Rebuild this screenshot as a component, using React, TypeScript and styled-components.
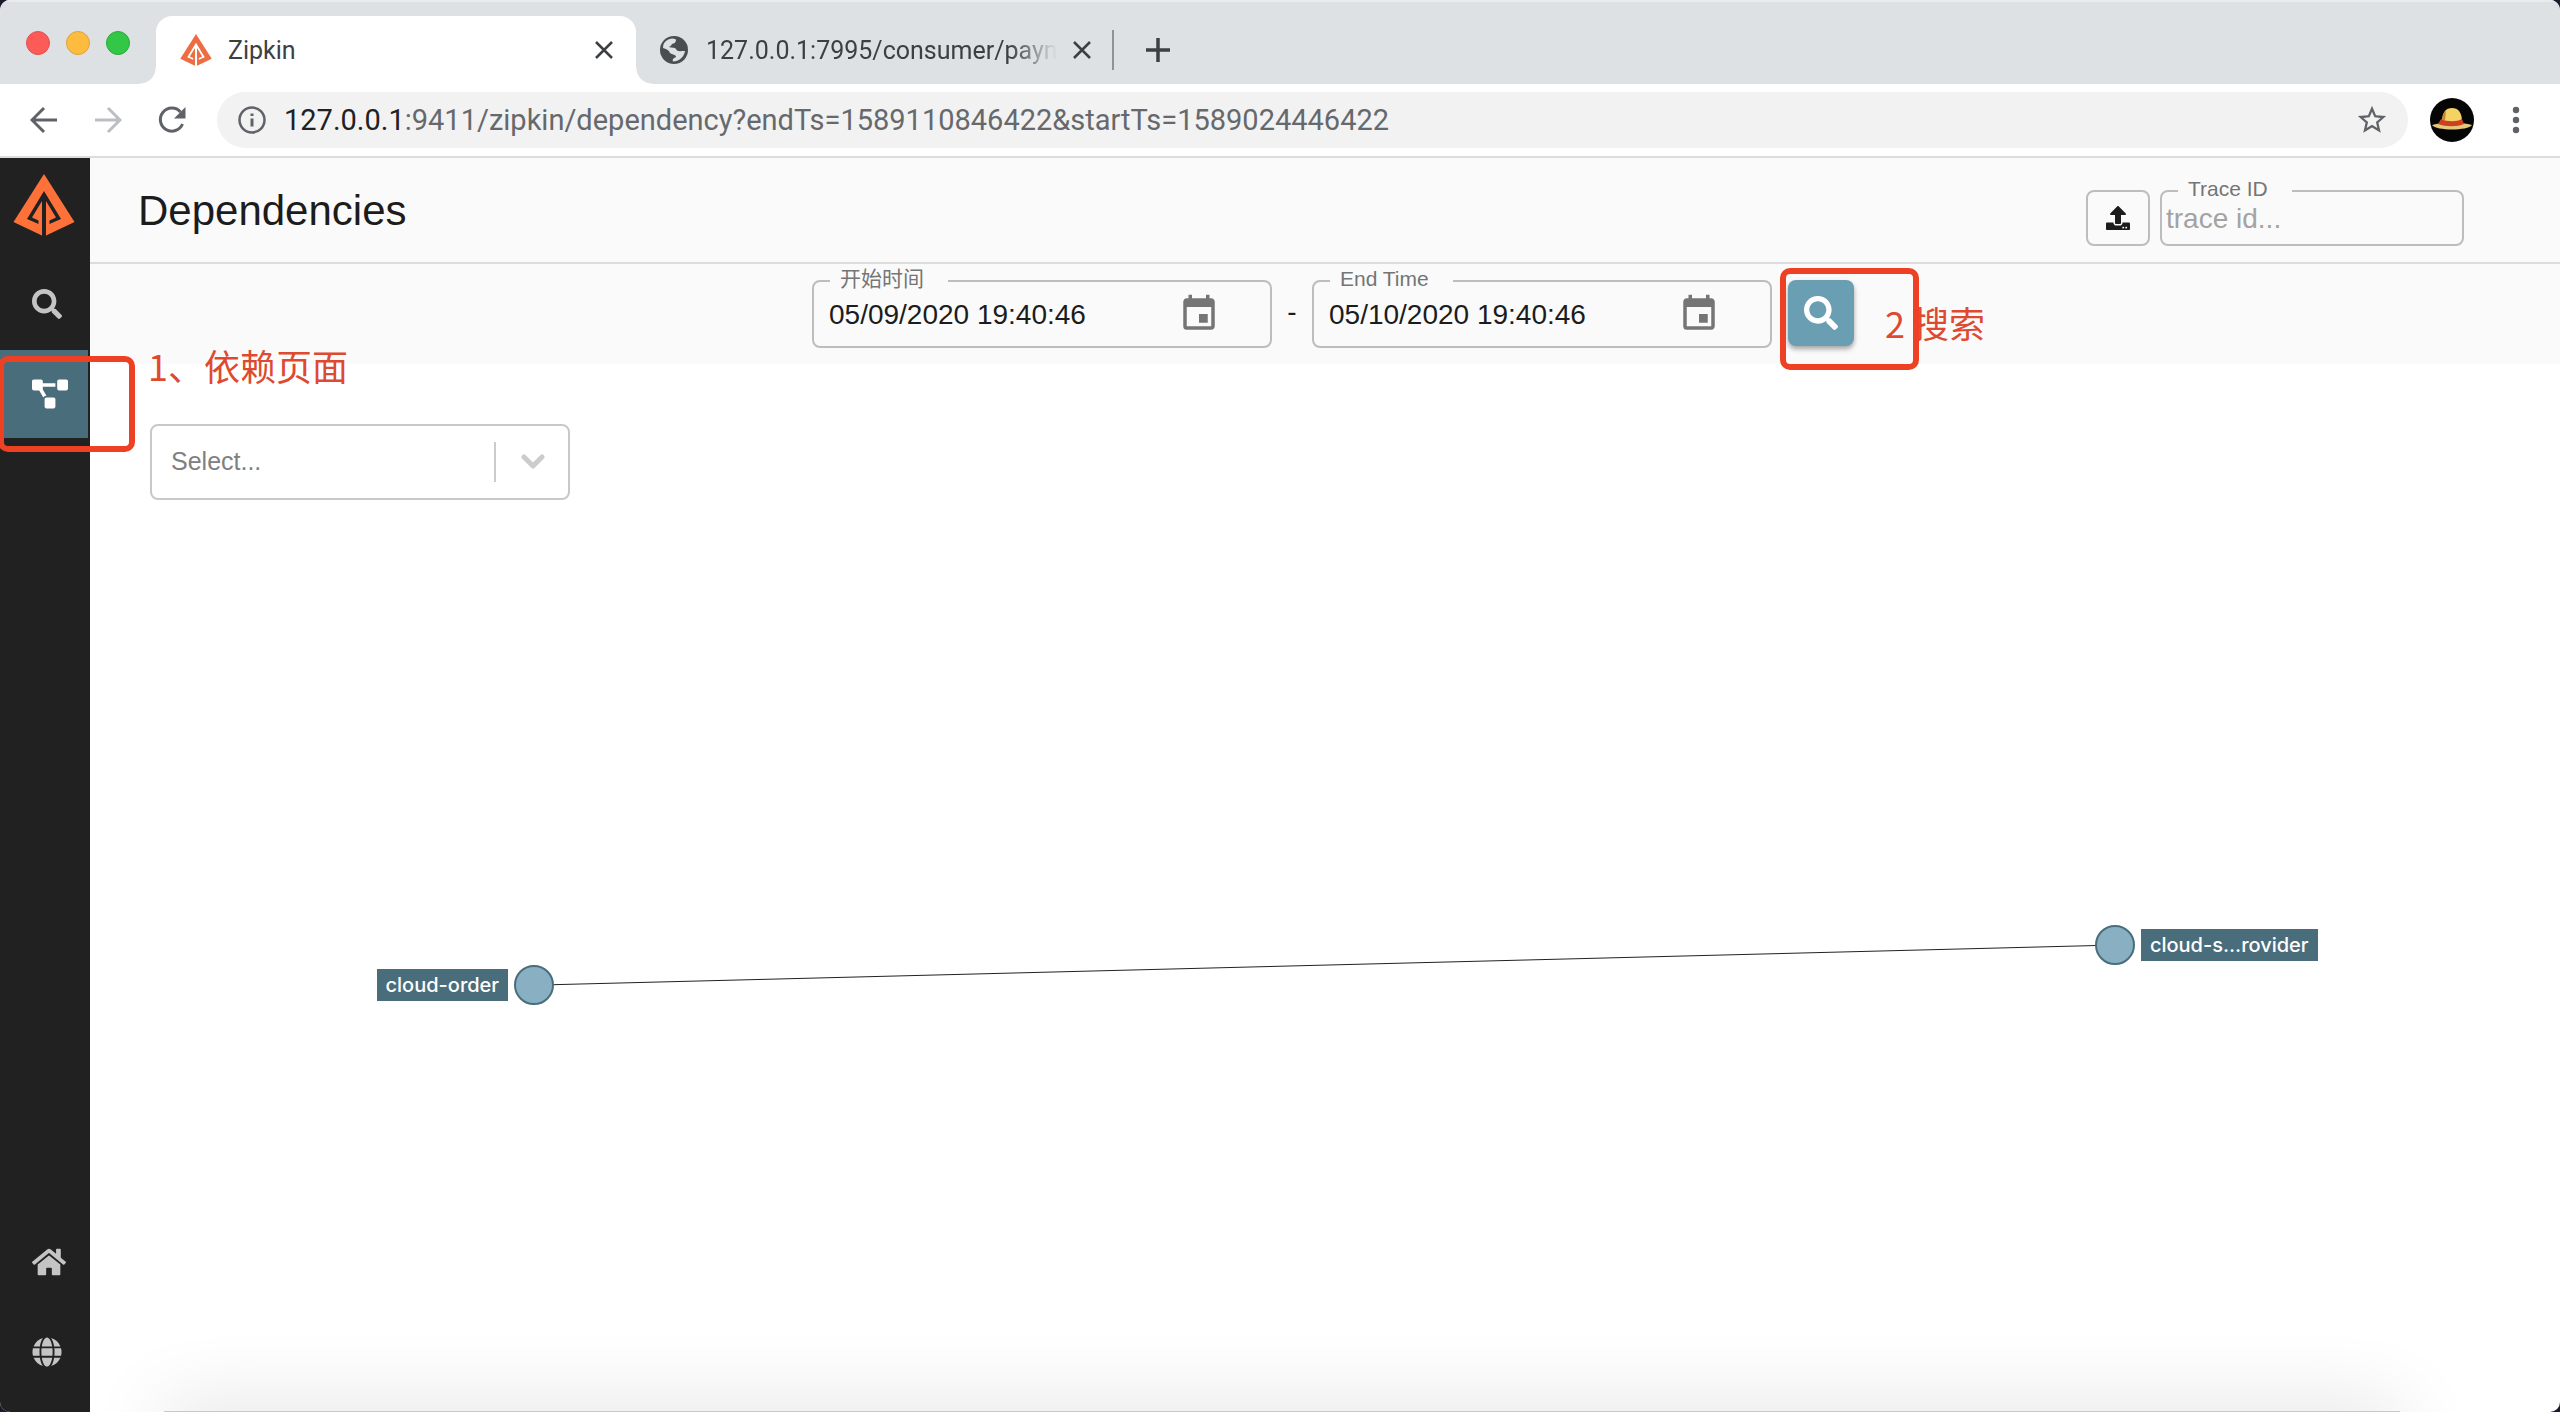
import React from "react";
import styled, { createGlobalStyle, css } from "styled-components";
import { FaSearch, FaProjectDiagram, FaHome, FaGlobe, FaUpload } from "react-icons/fa";
import { MdEvent, MdStarBorder } from "react-icons/md";

const uiFont = `"Liberation Sans", "Noto Sans CJK SC", sans-serif`;
const chromeFont = `Roboto, "Noto Sans CJK SC", sans-serif`;

const GlobalStyle = createGlobalStyle`
  *, *::before, *::after { box-sizing: border-box; }
  body { margin: 0; background: #1b1b2c; font-family: ${uiFont}; }
  button, input, select { font-family: inherit; margin: 0; }
`;

const BrowserWindow = styled.div`
  display: flex;
  flex-direction: column;
  min-height: 100vh;
  border-radius: 10px;
  overflow: hidden;
  background: #fff;
`;

/* ---------- browser chrome ---------- */

const TabStrip = styled.header`
  display: flex;
  align-items: stretch;
  height: 84px;
  padding-top: 16px;
  background: #dde1e4;
  box-shadow: inset 0 2px 0 #e9ecef;
  font-family: ${chromeFont};
`;

const TrafficLights = styled.div`
  display: flex;
  gap: 16px;
  width: 156px;
  padding: 15px 0 0 26px;
`;

const Light = styled.button<{ $color: string; $edge: string }>`
  width: 24px;
  height: 24px;
  padding: 0;
  border: 1px solid ${(p) => p.$edge};
  border-radius: 50%;
  background: ${(p) => p.$color};
`;

const Tab = styled.div<{ $active?: boolean }>`
  position: relative;
  display: flex;
  align-items: center;
  font-size: 25px;
  color: #3c4043;
  ${(p) =>
    p.$active
      ? css`
          width: 480px;
          padding: 0 20px 0 24px;
          border-radius: 16px 16px 0 0;
          background: #fff;
          &::before,
          &::after {
            content: "";
            position: absolute;
            bottom: 0;
            width: 16px;
            height: 16px;
          }
          &::before {
            right: 100%;
            background: radial-gradient(circle at 0 0, transparent 15px, #fff 16px);
          }
          &::after {
            left: 100%;
            background: radial-gradient(circle at 100% 0, transparent 15px, #fff 16px);
          }
        `
      : css`
          width: 478px;
          padding: 0 20px 0 22px;
          &::after {
            content: "";
            position: absolute;
            right: 0;
            width: 2px;
            height: 40px;
            background: #8f9296;
          }
        `}
`;

const TabTitle = styled.span<{ $fade?: boolean }>`
  flex: 1;
  min-width: 0;
  overflow: hidden;
  white-space: nowrap;
  margin: 0 2px 0 16px;
  ${(p) => p.$fade && css`mask-image: linear-gradient(to right, #000 84%, transparent 97%);`}
`;

const IconButton = styled.button<{ $size: number; $color?: string }>`
  display: flex;
  align-items: center;
  justify-content: center;
  flex: none;
  width: ${(p) => p.$size}px;
  height: ${(p) => p.$size}px;
  padding: 0;
  border: 0;
  background: none;
  color: ${(p) => p.$color ?? "#5f6368"};
`;

const NewTab = styled(IconButton)`
  align-self: center;
  margin-left: 28px;
`;

const Toolbar = styled.div`
  display: flex;
  align-items: center;
  height: 74px;
  padding: 0 24px;
  border-bottom: 2px solid #dcdcde;
  background: #fff;
  font-family: ${chromeFont};
`;

const NavButtons = styled.div`
  display: flex;
  gap: 24px;
  width: 193px;
`;

const Omnibox = styled.div`
  position: relative;
  display: flex;
  flex: 1;
  align-items: center;
  gap: 18px;
  height: 56px;
  padding: 0 18px 0 21px;
  border-radius: 28px;
  background: #f2f2f3;
`;

const Address = styled.a`
  flex: 1;
  font-size: 29px;
  line-height: 36px;
  color: #66696c;
  text-decoration: none;
  white-space: nowrap;
  strong { font-weight: 400; color: #202124; }
`;

const Avatar = styled.button`
  width: 44px;
  height: 44px;
  margin: 0 22px;
  padding: 0;
  border: 0;
  border-radius: 50%;
  background: none;
  svg { display: block; }
`;

/* ---------- page ---------- */

const Page = styled.div`
  display: flex;
  flex: 1;
`;

const Sidebar = styled.nav`
  display: flex;
  flex-direction: column;
  gap: 2px;
  width: 90px;
  padding-bottom: 16px;
  background: #212121;
`;

const LogoLink = styled.a`
  display: block;
  height: 100px;
  padding: 16px 0 0 13px;
  svg { display: block; }
`;

const NavItem = styled.a<{ $active?: boolean; $bottom?: boolean }>`
  position: relative;
  display: flex;
  align-items: center;
  width: 88px;
  height: 88px;
  padding-left: 32px;
  margin-top: ${(p) => (p.$bottom ? "auto" : 0)};
  background: ${(p) => (p.$active ? "#4a6d7c" : "transparent")};
  color: ${(p) => (p.$active ? "#fff" : "#c4c4c4")};
`;

const Main = styled.main`
  display: flex;
  flex: 1;
  flex-direction: column;
  min-width: 0;
`;

const TitleBar = styled.div`
  display: flex;
  align-items: flex-start;
  justify-content: space-between;
  height: 106px;
  padding: 32px 96px 0 48px;
  border-bottom: 2px solid #dcdcdc;
  background: #fafafa;
`;

const Title = styled.h1`
  margin: 0;
  font-size: 42px;
  font-weight: 400;
  line-height: 42px;
  color: #1c1c1c;
`;

const TitleTools = styled.div`
  display: flex;
  gap: 10px;
`;

const UploadButton = styled.button`
  display: flex;
  align-items: center;
  justify-content: center;
  width: 64px;
  height: 56px;
  border: 2px solid #bdbdbd;
  border-radius: 8px;
  background: #fafafa;
  color: #1c1c1c;
`;

const Field = styled.div<{ $width: number; $height: number }>`
  position: relative;
  display: flex;
  align-items: center;
  width: ${(p) => p.$width}px;
  height: ${(p) => p.$height}px;
  border: 2px solid #bdbdbd;
  border-radius: 8px;
`;

const FieldLabel = styled.label`
  position: absolute;
  top: -15px;
  left: 16px;
  padding: 0 24px 0 10px;
  background: #fafafa;
  font-size: 21px;
  line-height: 24px;
  color: #757575;
  white-space: nowrap;
`;

const FieldInput = styled.input<{ $pad: number }>`
  flex: 1;
  min-width: 0;
  height: 44px;
  padding: 2px 0 0 ${(p) => p.$pad}px;
  border: 0;
  outline: 0;
  background: none;
  font-size: 28px;
  color: #1c1c1c;
  &::placeholder { color: #a3a3a3; opacity: 1; }
`;

const CalendarButton = styled(IconButton)`
  margin-right: 50px;
`;

const SearchBar = styled.form`
  display: flex;
  justify-content: center;
  height: 100px;
  padding: 16px 0 0 16px;
  background: #fafafa;
`;

const Dash = styled.span`
  width: 40px;
  font-size: 28px;
  line-height: 64px;
  text-align: center;
  color: #1c1c1c;
`;

const SearchSlot = styled.div`
  position: relative;
  margin-left: 16px;
`;

const SearchButton = styled.button`
  display: flex;
  align-items: center;
  justify-content: center;
  width: 66px;
  height: 66px;
  padding: 0;
  border: 0;
  border-radius: 8px;
  background: #6a9eb3;
  box-shadow: 0 3px 5px rgba(0, 0, 0, 0.35);
  color: #fff;
`;

const FilterRow = styled.div`
  padding: 60px 60px 0;
`;

const SelectBox = styled.div`
  position: relative;
  width: 420px;
  height: 76px;
`;

const FilterSelect = styled.select`
  appearance: none;
  width: 100%;
  height: 100%;
  padding: 0 84px 2px 19px;
  border: 2px solid #c8c8c8;
  border-radius: 8px;
  background: #fff;
  font-size: 25px;
  color: #808080;
`;

const SelectArrow = styled.span`
  position: absolute;
  top: 18px;
  right: 0;
  display: flex;
  align-items: center;
  justify-content: center;
  width: 76px;
  height: 40px;
  border-left: 2px solid #ccc;
  pointer-events: none;
`;

const Graph = styled.section`
  position: relative;
  flex: 1;
  min-height: 480px;
  overflow: hidden;
`;

const Edges = styled.svg`
  position: absolute;
  width: 100%;
  height: 100%;
`;

const Node = styled.div`
  position: absolute;
  width: 40px;
  height: 40px;
  margin: -20px 0 0 -20px;
  border: 2px solid #4a6d7c;
  border-radius: 50%;
  background: #88b0c2;
`;

const NodeLabel = styled.span<{ $side: "left" | "right" }>`
  position: absolute;
  top: 2px;
  ${(p) => (p.$side === "left" ? "right" : "left")}: 44px;
  padding: 0 9px;
  background: #4a6d7c;
  font-family: Inter, sans-serif;
  font-size: 20px;
  font-weight: 500;
  line-height: 32px;
  color: #fff;
  white-space: nowrap;
`;

const DockShade = styled.div`
  position: absolute;
  top: calc(100% - 1px);
  left: 74px;
  right: 160px;
  height: 40px;
  background: #c8c8c8;
  box-shadow: 0 0 80px rgba(0, 0, 0, 0.16);
`;

/* ---------- annotations ---------- */

const Marker = styled.span`
  position: absolute;
  z-index: 2;
  border: 6px solid #ee4023;
  border-radius: 10px;
  pointer-events: none;
`;

const NavMarker = styled(Marker)`
  top: 6px;
  left: -2px;
  width: 137px;
  height: 96px;
`;

const SearchMarker = styled(Marker)`
  top: -12px;
  left: -8px;
  width: 139px;
  height: 102px;
`;

const Note = styled.span`
  position: absolute;
  z-index: 1;
  font-size: 36px;
  line-height: 44px;
  font-family: "Noto Sans CJK SC", sans-serif;
  font-weight: 400;
  color: #dd4a30;
  white-space: nowrap;
`;

const NavNote = styled(Note)`
  top: -7px;
  left: 148px;
`;

const SearchNote = styled(Note)`
  top: 20px;
  left: 97px;
`;

/* ---------- drawings ---------- */

const ZipkinMark = ({ size, color, hole }: { size: number; color: string; hole: string }) => (
  <svg width={size} height={size} viewBox="0 0 62 62" aria-hidden="true">
    <path d="M31 0 L61.500 48 L31 62.500 L0.500 48 Z" fill={color} />
    <path d="M29 62 V27 L19 43.500 L25.500 46.500 V50 L14 45 L31 17 L48 45 L36.500 50 V46.500 L43 43.500 L33 27 V62 Z" fill={hole} />
  </svg>
);

const TabGlobe = () => (
  <svg width="32" height="32" viewBox="0 0 32 32" aria-hidden="true">
    <circle cx="16" cy="16" r="14" fill="#4a4e52" />
    <path
      d="M5 14 C5 8 9 5 15 4.500 L18 5.500 C18 9 16 9.500 14 10 C13 12 12 12 11 13 C13 14 17 13 18 15 C19 18 22 17 27 17 C26 23 21 27.500 15 27.500 C14 25 16 24 18 23 C18 20 14 21 12 19 C11 16 8 15 5 14 Z"
      fill="#dde1e4"
    />
  </svg>
);

const Cross = () => (
  <svg width="18" height="18" viewBox="0 0 18 18" stroke="currentColor" strokeWidth="2.500" aria-hidden="true">
    <path d="M1 1 L17 17 M17 1 L1 17" />
  </svg>
);

const Arrow = ({ flip }: { flip?: boolean }) => (
  <svg width="28" height="28" viewBox="0 0 28 28" fill="none" stroke="currentColor" strokeWidth="3" aria-hidden="true">
    <path d={flip ? "M1 14 H26 M14 2 L26 14 L14 26" : "M27 14 H2 M14 2 L2 14 L14 26"} />
  </svg>
);

const Reload = () => (
  <svg width="28" height="28" viewBox="0 0 28 28" fill="none" stroke="currentColor" strokeWidth="3" aria-hidden="true">
    <path d="M24.500 18 A11.500 11.500 0 1 1 22.500 6" />
    <path d="M27.500 1 V12.500 H16 Z" fill="currentColor" stroke="none" />
  </svg>
);

const Info = () => (
  <svg width="28" height="28" viewBox="0 0 28 28" fill="none" stroke="#5f6368" strokeWidth="2.500" aria-hidden="true">
    <circle cx="14" cy="14" r="12.500" />
    <path d="M14 12.500 V20.500 M14 7.500 V10" strokeWidth="3" />
  </svg>
);

const StrawHat = () => (
  <svg width="44" height="44" viewBox="0 0 44 44" aria-hidden="true">
    <circle cx="22" cy="22" r="22" fill="#050505" />
    <path d="M2 27 C12 24 32 24 42 27 C38 33 6 33 2 27 Z" fill="#e3c877" />
    <path d="M12 24 C12 14 16 10 22 10 C28 10 32 14 32 24 Z" fill="#f4d264" />
    <path d="M11 21 C17 24 27 24 32 21 L34 26 C27 29 16 29 8 26 Z" fill="#cc3f24" />
    <path d="M13 22 C12 18 13 15 16 13 L15 22 Z" fill="#c9862e" />
  </svg>
);

const Dots = () => (
  <svg width="8" height="28" viewBox="0 0 8 28" fill="currentColor" aria-hidden="true">
    <circle cx="4" cy="4" r="3.200" />
    <circle cx="4" cy="14" r="3.200" />
    <circle cx="4" cy="24" r="3.200" />
  </svg>
);

/* ---------- data ---------- */

type Service = { name: string; x: number; y: number; side: "left" | "right" };

const order: Service = { name: "cloud-order", x: 17.98, y: 53.2, side: "left" };
const provider: Service = { name: "cloud-s...rovider", x: 81.98, y: 48.8, side: "right" };

const DateField = ({ id, label, value }: { id: string; label: string; value: string }) => (
  <Field $width={460} $height={68}>
    <FieldLabel htmlFor={id}>{label}</FieldLabel>
    <FieldInput id={id} $pad={15} defaultValue={value} />
    <CalendarButton type="button" $size={42} $color="#757575" aria-label={`${label} calendar`}>
      <MdEvent size={42} />
    </CalendarButton>
  </Field>
);

export default function App() {
  return (
    <BrowserWindow>
      <GlobalStyle />
      <TabStrip>
        <TrafficLights>
          <Light $color="#fc5b57" $edge="#e2504c" aria-label="Close window" />
          <Light $color="#fdbc40" $edge="#dfa236" aria-label="Minimize window" />
          <Light $color="#33c748" $edge="#27aa35" aria-label="Zoom window" />
        </TrafficLights>
        <Tab $active>
          <ZipkinMark size={32} color="#ee6c42" hole="#fff" />
          <TabTitle>Zipkin</TabTitle>
          <IconButton $size={24} $color="#3c4043" aria-label="Close tab"><Cross /></IconButton>
        </Tab>
        <Tab>
          <TabGlobe />
          <TabTitle $fade>127.0.0.1:7995/consumer/paym</TabTitle>
          <IconButton $size={24} $color="#3c4043" aria-label="Close tab"><Cross /></IconButton>
        </Tab>
        <NewTab $size={32} $color="#3c4043" aria-label="New tab">
          <svg width="24" height="24" viewBox="0 0 24 24" stroke="currentColor" strokeWidth="3.500" aria-hidden="true">
            <path d="M12 0 V24 M0 12 H24" />
          </svg>
        </NewTab>
      </TabStrip>
      <Toolbar>
        <NavButtons>
          <IconButton $size={40} aria-label="Back"><Arrow /></IconButton>
          <IconButton $size={40} $color="#bcbec1" aria-label="Forward"><Arrow flip /></IconButton>
          <IconButton $size={40} aria-label="Reload"><Reload /></IconButton>
        </NavButtons>
        <Omnibox>
          <Info />
          <Address href="#address">
            <strong>127.0.0.1</strong>:9411/zipkin/dependency?endTs=1589110846422&amp;startTs=1589024446422
          </Address>
          <IconButton $size={36} aria-label="Bookmark"><MdStarBorder size={34} /></IconButton>
        </Omnibox>
        <Avatar aria-label="Profile"><StrawHat /></Avatar>
        <IconButton $size={40} aria-label="Menu"><Dots /></IconButton>
      </Toolbar>
      <Page>
        <Sidebar>
          <LogoLink href="#zipkin" aria-label="Zipkin">
            <ZipkinMark size={62} color="#fe7139" hole="#212121" />
          </LogoLink>
          <NavItem href="#search" aria-label="Search"><FaSearch size={30} /></NavItem>
          <NavItem href="#dependency" aria-label="Dependencies" $active>
            <FaProjectDiagram size={36} />
            <NavMarker />
            <NavNote>1、依赖页面</NavNote>
          </NavItem>
          <NavItem href="#home" aria-label="Home" $bottom><FaHome size={34} /></NavItem>
          <NavItem href="#language" aria-label="Language"><FaGlobe size={30} /></NavItem>
        </Sidebar>
        <Main>
          <TitleBar>
            <Title>Dependencies</Title>
            <TitleTools>
              <UploadButton aria-label="Upload"><FaUpload size={24} /></UploadButton>
              <Field $width={304} $height={56}>
                <FieldLabel htmlFor="trace">Trace ID</FieldLabel>
                <FieldInput id="trace" $pad={4} placeholder="trace id..." />
              </Field>
            </TitleTools>
          </TitleBar>
          <SearchBar onSubmit={(e) => e.preventDefault()}>
            <DateField id="start" label="开始时间" value="05/09/2020 19:40:46" />
            <Dash>-</Dash>
            <DateField id="end" label="End Time" value="05/10/2020 19:40:46" />
            <SearchSlot>
              <SearchButton type="submit" aria-label="Search"><FaSearch size={34} /></SearchButton>
              <SearchMarker />
              <SearchNote>2 搜索</SearchNote>
            </SearchSlot>
          </SearchBar>
          <FilterRow>
            <SelectBox>
              <FilterSelect aria-label="Filter services">
                <option>Select...</option>
              </FilterSelect>
              <SelectArrow>
                <svg width="24" height="16" viewBox="0 0 24 16" fill="none" stroke="#ccc" strokeWidth="5" strokeLinecap="round" strokeLinejoin="round" aria-hidden="true">
                  <path d="M3 3 L12 12 L21 3" />
                </svg>
              </SelectArrow>
            </SelectBox>
          </FilterRow>
          <Graph>
            <Edges aria-hidden="true">
              <line x1={`${order.x}%`} y1={`${order.y}%`} x2={`${provider.x}%`} y2={`${provider.y}%`} stroke="#222" />
            </Edges>
            {[order, provider].map((s) => (
              <Node key={s.name} style={{ left: `${s.x}%`, top: `${s.y}%` }}>
                <NodeLabel $side={s.side}>{s.name}</NodeLabel>
              </Node>
            ))}
            <DockShade />
          </Graph>
        </Main>
      </Page>
    </BrowserWindow>
  );
}
